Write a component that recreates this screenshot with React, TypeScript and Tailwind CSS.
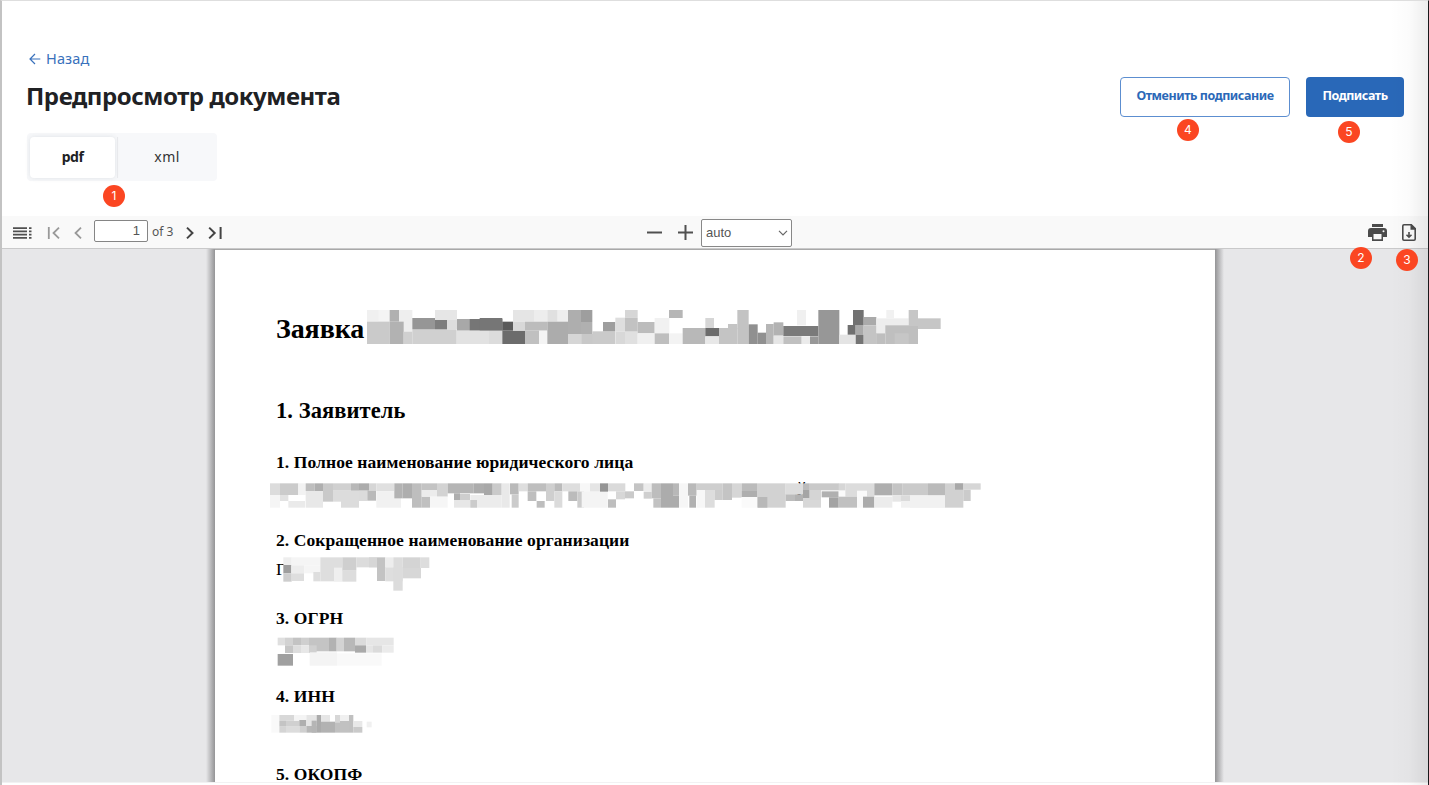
import type { ReactNode } from "react";

type Cell = [number, number, number, number, number];

// Cells are [x, y, width, height, grey level], at three units per pixel.
const applicationCells: Cell[] = [
  [21, 30, 68, 35, 240], [55, 30, 34, 35, 244], [89, 30, 28, 35, 176], [117, 30, 40, 65, 238], [21, 65, 68, 67, 202], [89, 65, 42, 67, 178],
  [131, 95, 26, 37, 208], [157, 88, 133, 44, 208], [157, 54, 68, 34, 150], [225, 30, 66, 30, 230], [225, 60, 36, 28, 126], [261, 60, 30, 28, 222],
  [291, 57, 37, 35, 168], [328, 57, 99, 35, 118], [359, 54, 68, 38, 118], [290, 92, 97, 40, 226], [387, 92, 40, 40, 220], [427, 65, 32, 27, 90],
  [427, 92, 68, 40, 108], [459, 30, 63, 35, 229], [459, 65, 36, 27, 216], [522, 30, 40, 35, 237], [495, 65, 67, 27, 188], [495, 92, 42, 40, 192],
  [537, 92, 25, 40, 244], [562, 30, 31, 35, 224], [593, 30, 32, 35, 238], [562, 65, 62, 67, 172], [624, 30, 39, 72, 174], [663, 30, 34, 36, 158],
  [663, 66, 34, 38, 176], [624, 102, 42, 30, 214], [665, 102, 100, 30, 200], [697, 94, 68, 38, 202], [729, 66, 37, 28, 158], [766, 53, 29, 42, 222],
  [766, 95, 29, 37, 216], [795, 30, 38, 23, 214], [795, 53, 38, 42, 194], [795, 95, 38, 37, 224], [833, 66, 51, 34, 188], [833, 100, 51, 32, 240],
  [884, 54, 44, 46, 241], [884, 100, 43, 32, 190], [927, 30, 41, 24, 182], [927, 100, 41, 32, 243], [968, 84, 68, 48, 184], [1036, 54, 26, 30, 214],
  [1036, 84, 41, 25, 108], [1036, 109, 41, 23, 232], [1077, 84, 55, 48, 196], [1104, 72, 28, 15, 196], [1132, 30, 34, 102, 195], [1166, 73, 27, 59, 144],
  [1193, 98, 25, 34, 144], [1218, 72, 23, 60, 182], [1241, 67, 29, 40, 178], [1241, 107, 29, 25, 230], [1270, 78, 105, 30, 122], [1270, 109, 55, 23, 192],
  [1311, 30, 27, 46, 240], [1325, 109, 25, 23, 235], [1350, 109, 25, 23, 152], [1375, 30, 63, 102, 151], [1438, 104, 48, 28, 228], [1463, 75, 24, 29, 112],
  [1479, 30, 32, 45, 114], [1487, 75, 24, 29, 170], [1487, 104, 24, 28, 116], [1511, 51, 38, 25, 170], [1511, 76, 39, 56, 196], [1549, 55, 97, 45, 237],
  [1579, 30, 23, 25, 241], [1549, 100, 27, 32, 190], [1576, 76, 98, 56, 191], [1604, 100, 42, 32, 198], [1646, 30, 28, 48, 198], [1674, 55, 68, 32, 198],
];

const fullNameCells: Cell[] = [
  [15, 25, 30, 35, 220], [45, 25, 55, 35, 203], [15, 60, 30, 38, 245], [45, 60, 25, 18, 226], [70, 78, 50, 20, 234], [100, 25, 22, 35, 242],
  [122, 25, 27, 23, 190], [149, 25, 25, 23, 175], [122, 48, 52, 50, 232], [174, 25, 30, 55, 201], [204, 25, 54, 22, 208], [204, 47, 78, 33, 220],
  [228, 78, 54, 20, 220], [258, 25, 24, 22, 184], [282, 25, 30, 22, 172], [312, 25, 22, 22, 214], [282, 47, 25, 31, 219], [307, 47, 26, 30, 186],
  [334, 25, 54, 24, 224], [334, 49, 74, 49, 241], [388, 25, 25, 45, 179], [413, 25, 28, 45, 174], [441, 25, 29, 73, 190], [470, 65, 25, 33, 192],
  [470, 25, 46, 20, 195], [470, 45, 46, 20, 236], [516, 25, 32, 40, 211], [495, 65, 53, 33, 246], [548, 25, 77, 30, 181], [625, 25, 32, 30, 172],
  [657, 25, 26, 35, 168], [683, 25, 27, 35, 202], [710, 25, 24, 73, 233], [567, 55, 18, 20, 174], [585, 57, 30, 18, 206], [567, 75, 49, 23, 231],
  [616, 60, 94, 38, 236], [616, 75, 20, 23, 203],
  [735, 25, 26, 33, 185], [740, 58, 21, 40, 203], [761, 25, 27, 24, 222], [788, 25, 55, 24, 190], [788, 49, 26, 29, 190], [815, 78, 24, 20, 190],
  [843, 25, 25, 53, 207], [868, 25, 24, 24, 187], [868, 49, 24, 49, 219], [892, 25, 53, 24, 222], [910, 49, 27, 29, 187], [937, 49, 20, 49, 204],
  [950, 49, 78, 49, 244], [945, 25, 30, 24, 247], [975, 25, 30, 24, 229], [1005, 25, 24, 25, 149], [1029, 25, 52, 24, 218], [1053, 49, 27, 24, 215],
  [1080, 49, 27, 21, 202], [1029, 73, 24, 25, 190], [1107, 25, 29, 23, 196], [1136, 25, 24, 26, 236], [1136, 51, 24, 20, 207], [1160, 25, 28, 45, 189],
  [1165, 70, 23, 28, 194], [1188, 25, 36, 73, 172], [1224, 25, 18, 37, 184], [1224, 62, 18, 36, 172], [1242, 25, 27, 73, 246], [1269, 25, 26, 37, 185],
  [1273, 62, 20, 36, 177], [1295, 25, 78, 20, 206], [1295, 45, 25, 53, 247], [1320, 45, 29, 53, 221], [1349, 45, 24, 30, 204], [1373, 25, 28, 50, 196],
  [1401, 25, 29, 43, 214], [1430, 25, 46, 23, 187], [1430, 48, 46, 18, 174], [1430, 66, 49, 32, 250], [1476, 25, 86, 73, 210], [1479, 66, 28, 32, 184],
  [1562, 25, 52, 33, 221], [1562, 58, 28, 20, 188], [1590, 58, 24, 20, 178], [1614, 25, 18, 20, 187], [1614, 45, 20, 24, 165], [1614, 69, 54, 29, 216],
  [1632, 25, 90, 21, 201], [1634, 45, 34, 30, 213], [1670, 49, 51, 18, 176], [1692, 67, 29, 31, 163], [1721, 46, 20, 18, 250], [1721, 25, 20, 21, 214],
  [1741, 25, 87, 40, 220], [1721, 65, 55, 33, 192], [1776, 47, 30, 51, 249], [1794, 65, 34, 33, 171], [1828, 25, 54, 36, 174], [1882, 25, 31, 36, 196],
  [1913, 25, 76, 36, 202], [1989, 25, 51, 36, 186], [1828, 65, 54, 33, 236], [1882, 61, 26, 19, 230], [1908, 61, 27, 18, 219], [1908, 79, 132, 19, 241],
  [1935, 62, 105, 36, 241], [2040, 25, 55, 73, 209], [2070, 25, 25, 19, 168], [2095, 25, 52, 19, 214], [2095, 44, 22, 34, 203],
];

const shortNameCells: Cell[] = [
  [55, 22, 25, 23, 238], [80, 22, 86, 24, 245], [55, 45, 24, 25, 158], [55, 70, 25, 25, 205], [79, 46, 39, 24, 237], [80, 70, 37, 23, 222],
  [118, 46, 48, 24, 245], [145, 66, 21, 28, 222], [166, 22, 66, 72, 222], [207, 53, 25, 41, 239], [232, 22, 42, 40, 207], [232, 62, 42, 33, 221],
  [274, 22, 62, 30, 220], [312, 22, 24, 30, 214], [336, 22, 25, 71, 195], [361, 22, 24, 30, 237], [361, 52, 52, 42, 222], [385, 22, 28, 100, 220],
  [413, 22, 54, 32, 212], [467, 22, 26, 32, 221], [413, 54, 55, 31, 215],
];

const ogrnCells: Cell[] = [
  [38, 23, 22, 23, 223], [60, 23, 24, 23, 210], [84, 23, 24, 23, 195], [108, 23, 24, 23, 207], [132, 23, 60, 41, 196], [192, 23, 23, 41, 178],
  [215, 23, 22, 41, 211], [237, 23, 33, 41, 184], [270, 23, 34, 23, 219], [304, 23, 82, 23, 230], [60, 46, 24, 23, 198], [84, 46, 24, 23, 221],
  [108, 46, 24, 23, 231], [132, 46, 23, 23, 208], [270, 46, 33, 22, 170], [303, 46, 21, 22, 229], [324, 46, 28, 22, 219], [352, 46, 34, 22, 235],
  [38, 72, 46, 35, 160], [134, 67, 82, 40, 244], [216, 70, 134, 37, 249],
];

const innCells: Cell[] = [
  [19, 21, 24, 53, 249], [43, 21, 44, 17, 216], [43, 38, 20, 18, 196], [63, 38, 40, 18, 208], [43, 56, 20, 18, 212], [63, 56, 40, 18, 220],
  [87, 21, 36, 17, 244], [103, 36, 21, 18, 174], [124, 21, 31, 33, 229], [103, 54, 21, 20, 207], [124, 54, 31, 20, 183], [140, 38, 15, 36, 181],
  [155, 21, 13, 53, 171], [168, 21, 27, 20, 230], [168, 41, 42, 33, 178], [210, 21, 15, 22, 215], [210, 43, 15, 31, 192], [225, 21, 27, 18, 240],
  [225, 39, 27, 35, 193], [252, 21, 13, 53, 192], [265, 39, 27, 18, 232], [265, 57, 27, 17, 202], [305, 41, 15, 17, 240],
];

function Mosaic({ cells, width, height, className }: { cells: Cell[]; width: number; height: number; className: string }) {
  return (
    <svg className={`absolute ${className}`} width={width} height={height} viewBox={`0 0 ${width * 3} ${height * 3}`} aria-hidden="true">
      {cells.map(([x, y, w, h, level], index) => (
        <rect key={index} x={x} y={y} width={w} height={h} fill={`rgb(${level},${level},${level})`} />
      ))}
    </svg>
  );
}

function Badge({ className, children }: { className: string; children: ReactNode }) {
  return (
    <span className={`absolute z-10 flex size-[22px] items-center justify-center rounded-full bg-[#fb4622] font-[Inter] text-[12px] leading-none text-white ${className}`}>
      {children}
    </span>
  );
}

function Field({ title, children }: { title: string; children?: ReactNode }) {
  return (
    <section className="relative h-[78px] shrink-0 last:h-auto">
      <h3 className="text-[17.5px] leading-6 font-bold tracking-[0.09px] whitespace-nowrap">{title}</h3>
      {children}
    </section>
  );
}

function PageHeader() {
  return (
    <header className="flex h-[215px] shrink-0 justify-between pr-[24px] pl-[24px]">
      <div className="relative pt-[46px]">
        <a className="flex h-[22px] w-fit items-center gap-[6px] text-[#3971bc]" href="#back">
          <svg className="mt-[2px] ml-[3px]" width="12" height="12" viewBox="0 0 12 12" fill="none" stroke="currentColor" strokeWidth="1.2">
            <path d="M11.3 6H1M6 1 1 6l5 5" />
          </svg>
          <span className="-ml-px text-[14.5px] leading-[22px] tracking-[0.12px]">Назад</span>
        </a>
        <h1 className="mt-[9px] text-[24px] leading-9 font-bold tracking-[-0.45px] whitespace-nowrap text-[#202124]">Предпросмотр документа</h1>
        <div className="mt-[19px] ml-px flex h-[48px] w-[190px] rounded-[4px] bg-[#f7f8fa] p-[3px]">
          <button className="mt-px h-[41px] w-[85px] rounded-[4px] bg-white pb-[3px] text-[14px] font-bold tracking-[-0.5px] text-[#202124] shadow-[0_0_5px_rgba(60,70,90,0.12)]">pdf</button>
          <span className="mt-px ml-[2px] h-[41px] w-px bg-[#e8e9ec]" />
          <button className="h-[41px] flex-1 pb-px pl-[2px] text-[14px] tracking-[0.4px] text-[#333]">xml</button>
        </div>
        <Badge className="top-[184px] left-[77px]">1</Badge>
      </div>
      <div className="relative flex gap-[16px] pt-[76px]">
        <button className="h-[40px] w-[170px] rounded-[4px] border border-[#5c8ed0] bg-white pb-[2px] text-[12.5px] font-bold tracking-[-0.45px] whitespace-nowrap text-[#2b68b8]">Отменить подписание</button>
        <button className="h-[40px] w-[98px] rounded-[4px] bg-[#2968b8] pb-[2px] text-[12.5px] font-bold tracking-[-0.45px] text-white">Подписать</button>
        <Badge className="top-[118px] left-[57px]">4</Badge>
        <Badge className="top-[120px] left-[218px]">5</Badge>
      </div>
    </header>
  );
}

function Toolbar() {
  return (
    <div className="relative flex h-[33px] shrink-0 items-center justify-between border-b border-[#c9c9ca] bg-[#f9f9f9] pt-px font-['Liberation_Sans'] text-[13px] text-[#555]">
      <div className="flex items-center">
        <svg className="mt-px ml-[11px]" width="19" height="12" viewBox="0 0 19 12" fill="none" stroke="#505050" strokeWidth="1.7">
          <path d="M0 1.2h14M0 4.400h14M0 7.600h14M0 10.800h14" />
          <path d="M16 1.2h2.5M16 4.400h2.5M16 7.600h2.5M16 10.800h2.5" />
        </svg>
        <svg className="ml-[15px]" width="14" height="14" viewBox="0 0 14 14" fill="none" stroke="#999" strokeWidth="1.8">
          <path d="M1.800 1v12M12 1.600 6.500 7l5.500 5.400" />
        </svg>
        <svg className="ml-[13px]" width="8" height="14" viewBox="0 0 8 14" fill="none" stroke="#999" strokeWidth="1.800">
          <path d="M7 1.600 1.500 7 7 12.400" />
        </svg>
        <span className="mb-[4px] ml-[12px] flex h-[22px] w-[54px] items-center justify-end rounded-[2px] border border-[#858585] bg-white pr-[7px]">1</span>
        <span className="mb-[2px] ml-[4px] font-['Noto_Sans'] text-[12px]">of 3</span>
        <svg className="ml-[13px]" width="8" height="14" viewBox="0 0 8 14" fill="none" stroke="#444" strokeWidth="2">
          <path d="m1 1.600 5.500 5.400L1 12.400" />
        </svg>
        <svg className="ml-[14px]" width="14" height="14" viewBox="0 0 14 14" fill="none" stroke="#444" strokeWidth="2">
          <path d="M1.200 1.600 6.700 7l-5.500 5.400M12.600 1v12" />
        </svg>
      </div>
      <div className="absolute left-[645px] flex items-center">
        <svg width="15" height="15" viewBox="0 0 15 15" stroke="#505050" strokeWidth="2"><path d="M0 7.500h15" /></svg>
        <svg className="ml-[16px]" width="15" height="15" viewBox="0 0 15 15" stroke="#505050" strokeWidth="2"><path d="M0 7.500h15M7.500 0v15" /></svg>
        <button className="ml-[8px] flex h-[28px] w-[91px] items-center justify-between rounded-[2px] border border-[#888] bg-white pr-[3px] pl-[4px]">
          <span>auto</span>
          <svg width="10" height="6" viewBox="0 0 10 6" fill="none" stroke="#666" strokeWidth="1.200"><path d="m1 .8 4 4 4-4" /></svg>
        </button>
      </div>
      <div className="flex items-center">
        <svg width="19" height="17" viewBox="0 0 19 17" fill="#4b4b4b">
          <path d="M4 0h11v3H4zM3 4h13a3 3 0 0 1 3 3v6h-4v4H4v-4H0V7a3 3 0 0 1 3-3Zm2.500 6v5.300h8V10ZM15.500 6.200a1 1 0 1 0 0 2 1 1 0 0 0 0-2Z" fillRule="evenodd" />
        </svg>
        <svg className="mr-[12px] ml-[15px]" width="14" height="17" viewBox="0 0 14 17" fill="none" stroke="#4b4b4b" strokeWidth="1.600">
          <path d="M2 .8h7.300l3.900 3.900V15q0 1.200-1.200 1.200H2Q.8 16.200.8 15V2Q.8.8 2 .8Z" />
          <path d="M8.500.8v5h4.700V4.500L9.400.8Z" fill="#4b4b4b" stroke="none" />
          <path d="M7 8v5M4.500 10.700 7 13.200l2.500-2.500" />
        </svg>
      </div>
      <Badge className="right-[56px] -bottom-[21px]">2</Badge>
      <Badge className="right-[10px] -bottom-[23px]">3</Badge>
    </div>
  );
}

function DocumentPage() {
  return (
    <main className="flex h-[534px] shrink-0 justify-center overflow-hidden border-b border-[#f2f2f3] bg-[#e7e7e9]">
      <div className="w-[9px] shrink-0 bg-gradient-to-r from-[#e7e7e9] to-[#949496]" />
      <article className="flex w-[1000px] shrink-0 flex-col border-t border-[#a9a9a9] bg-white pl-[61px] font-['Liberation_Serif'] text-black">
        <div className="relative h-[144px] shrink-0 pt-[63px]">
          <h1 className="text-[28px] leading-8 font-bold tracking-[-0.1px]">Заявка</h1>
          <Mosaic cells={applicationCells} width={600} height={50} className="top-[50px] left-[84px]" />
        </div>
        <h2 className="h-[56px] shrink-0 pt-px text-[22.5px] leading-8 font-bold tracking-[0.08px]">1. Заявитель</h2>
        <Field title="1. Полное наименование юридического лица">
          <span className="absolute top-[27px] left-[521px] text-[18px] leading-6">й</span>
          <Mosaic cells={fullNameCells} width={730} height={40} className="top-[25px] -left-[11px]" />
        </Field>
        <Field title="2. Сокращенное наименование организации">
          <p className="pt-[5px] text-[17.5px] leading-6">Г</p>
          <Mosaic cells={shortNameCells} width={180} height={50} className="top-[22px] -left-[11px]" />
        </Field>
        <Field title="3. ОГРН">
          <Mosaic cells={ogrnCells} width={180} height={50} className="top-[24px] -left-[11px]" />
        </Field>
        <Field title="4. ИНН">
          <Mosaic cells={innCells} width={180} height={40} className="top-[24px] -left-[11px]" />
        </Field>
        <Field title="5. ОКОПФ" />
      </article>
      <div className="w-[9px] shrink-0 bg-gradient-to-l from-[#e7e7e9] to-[#949496]" />
    </main>
  );
}

export default function App() {
  return (
    <div className="relative flex h-[785px] w-[1429px] flex-col overflow-hidden border-t border-r border-l-2 border-t-[#dedede] border-r-[#18191b] border-l-[#c3c3c3] bg-white font-['Noto_Sans',sans-serif]">
      <PageHeader />
      <Toolbar />
      <DocumentPage />
      <div className="pointer-events-none absolute inset-y-0 right-0 w-[38px] bg-gradient-to-r from-transparent via-black/[0.015] to-black/[0.07]" />
    </div>
  );
}
